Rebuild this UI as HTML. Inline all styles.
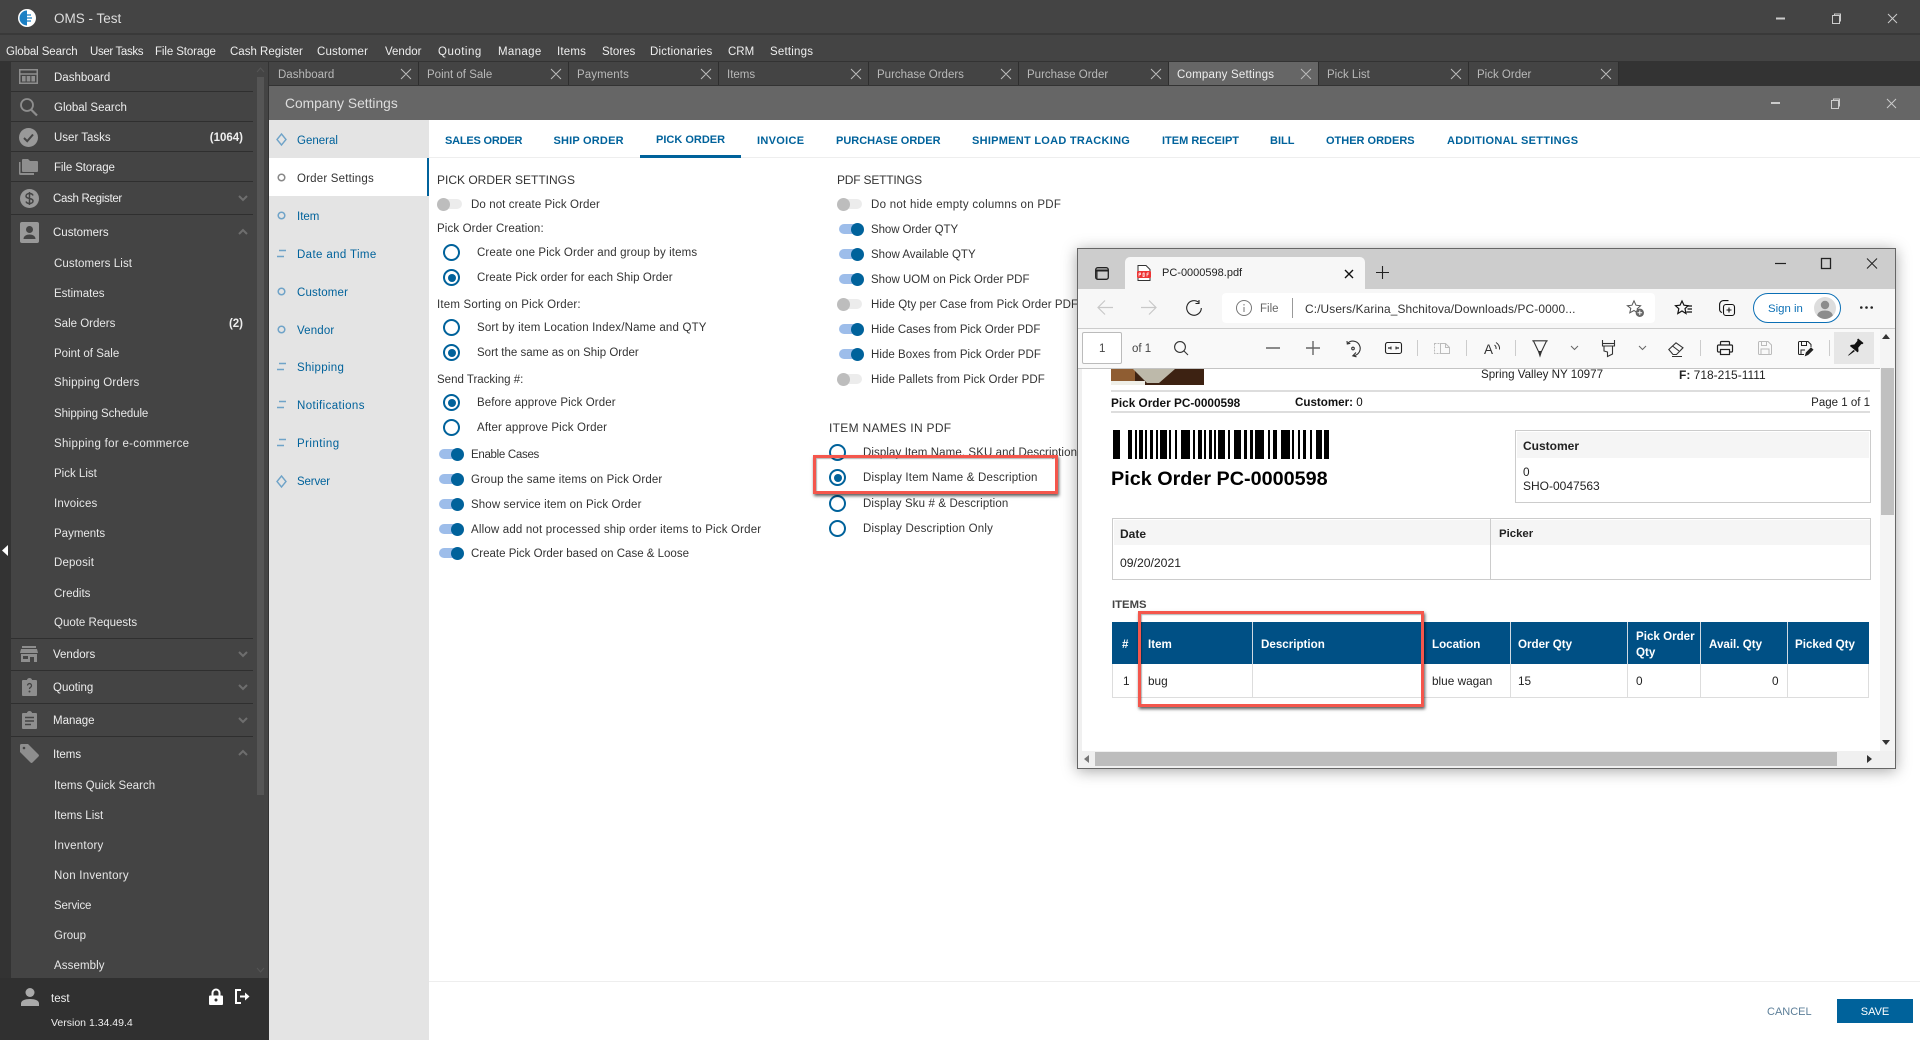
<!DOCTYPE html>
<html><head><meta charset="utf-8"><title>OMS - Test</title>
<style>
*{box-sizing:border-box}
html,body{margin:0;padding:0;width:1920px;height:1040px;overflow:hidden;background:#fff;font-family:"Liberation Sans",sans-serif;font-size:11.5px;color:#333}
.a{position:absolute}
.t{position:absolute;white-space:nowrap;line-height:16px;height:16px;margin-top:1px}
.m{color:#eee}
.s{color:#e8e8e8}
.b{font-weight:bold}
.tb{color:#b9b9b9;font-size:11.5px}
.n{color:#00629b}
.h{font-size:11px;font-weight:bold;color:#00629b}
.g{font-size:12px;color:#333}
.l{position:absolute;left:11px;width:242px;height:1px;background:#2f2f2f}
.tab{position:absolute;top:62px;height:23px;width:150px;background:#444;border-right:1px solid #2e2e2e}
.rd{position:absolute;width:17px;height:17px;border:2px solid #00629b;border-radius:50%;background:#fff}
.rd.on::after{content:"";position:absolute;left:2.5px;top:2.5px;width:8px;height:8px;border-radius:50%;background:#00629b}
.tg{position:absolute;width:24px;height:10px;border-radius:5px;background:#9dbdea}
.tg::after{content:"";position:absolute;right:-1px;top:-1.5px;width:13px;height:13px;border-radius:50%;background:#00629b}
.tg.off{background:#ececec}
.tg.off::after{left:-1px;right:auto;background:#bdbdbd}
.p{color:#222;font-size:11.8px}
.th{color:#fff;font-weight:bold;font-size:11.6px}
svg{position:absolute;overflow:visible}
.rb{position:absolute;border:3px solid #f4564c;box-shadow:1px 2px 3px rgba(0,0,0,.65),inset 1px 1px 1px rgba(0,0,0,.3);z-index:5}
</style></head><body>

<!-- top -->
<div class="a" style="left:0;top:0;width:1920px;height:62px;background:#444"></div>
<div class="a" style="left:0;top:33px;width:1920px;height:2px;background:#393939"></div>
<div class="a" style="left:0;top:61px;width:1920px;height:1px;background:#333"></div>
<svg style="left:18px;top:8px" width="18" height="20" viewBox="0 0 18 20"><circle cx="9" cy="10" r="9" fill="#fff"/><path d="M9 2.5A7.5 7.5 0 0 0 9 17.5Z" fill="#1b7fc4"/><path d="M6 7h7M5 10h9M6 13h7" stroke="#1b7fc4" stroke-width="1.2"/></svg>
<div class="t" style="left:54px;top:10px;font-size:13.5px;color:#ddd">OMS - Test</div>
<svg style="left:1776px;top:14px" width="130" height="10" viewBox="0 0 130 10" fill="none" stroke="#ccc"><path d="M0 4.5h9" stroke-width="2"/><rect x="56.5" y="1.5" width="7" height="8"/><path d="M58.5 1.500V0h6v7h-1"/><path d="M112 0l9 9M121 0l-9 9"/></svg>

<div class="t m" style="left:6px;top:43px;letter-spacing:-.1px">Global Search</div>
<div class="t m" style="left:90px;top:43px;letter-spacing:-.35px">User Tasks</div>
<div class="t m" style="left:155px;top:43px;letter-spacing:-.1px">File Storage</div>
<div class="t m" style="left:230px;top:43px">Cash Register</div>
<div class="t m" style="left:317px;top:43px;letter-spacing:.15px">Customer</div>
<div class="t m" style="left:385px;top:43px">Vendor</div>
<div class="t m" style="left:438px;top:43px;letter-spacing:.5px">Quoting</div>
<div class="t m" style="left:498px;top:43px;letter-spacing:.35px">Manage</div>
<div class="t m" style="left:557px;top:43px;letter-spacing:.2px">Items</div>
<div class="t m" style="left:602px;top:43px">Stores</div>
<div class="t m" style="left:650px;top:43px;letter-spacing:.2px">Dictionaries</div>
<div class="t m" style="left:728px;top:43px">CRM</div>
<div class="t m" style="left:770px;top:43px;letter-spacing:.2px">Settings</div>

<!-- sidebar -->
<div class="a" style="left:0;top:62px;width:11px;height:916px;background:#333"></div>
<div class="a" style="left:11px;top:62px;width:258px;height:916px;background:#444"></div>
<div class="a" style="left:268px;top:62px;width:1px;height:916px;background:#333"></div>
<div class="a" style="left:0;top:978px;width:269px;height:62px;background:#303030"></div>
<div class="a" style="left:257px;top:77px;width:7px;height:718px;background:#555"></div>
<svg style="left:2px;top:545px" width="6" height="11"><path d="M6 0v11L0 5.500Z" fill="#fff"/></svg>
<svg style="left:257px;top:68px" width="7" height="4"><path d="M0 4l3.500-4L7 4" stroke="#555" fill="none"/></svg>
<svg style="left:257px;top:968px" width="7" height="4"><path d="M0 0l3.500 4L7 0" stroke="#555" fill="none"/></svg>

<div class="l" style="top:91px"></div><div class="l" style="top:121px"></div><div class="l" style="top:151px"></div><div class="l" style="top:181px"></div><div class="l" style="top:214px"></div>
<div class="l" style="top:638px"></div><div class="l" style="top:670px"></div><div class="l" style="top:703px"></div><div class="l" style="top:736px"></div>

<svg style="left:19px;top:69px" width="19" height="15" viewBox="0 0 19 15" fill="none" stroke="#8e8e8e" stroke-width="1.500"><rect x=".75" y=".75" width="17.500" height="13.500"/><path d="M1 5h17"/><path d="M3 7h3.600v5.500H3zM7.700 7h3.600v5.500H7.700zM12.400 7H16v5.500h-3.600z" fill="#8e8e8e" stroke="none"/></svg>
<svg style="left:19px;top:98px" width="19" height="19" viewBox="0 0 19 19" fill="none" stroke="#8e8e8e" stroke-width="1.800"><circle cx="8" cy="7" r="6"/><path d="M12 11.500l6 6" stroke-width="2.200"/></svg>
<svg style="left:19px;top:128px" width="19" height="19" viewBox="0 0 19 19"><circle cx="9.500" cy="9.500" r="9.500" fill="#999"/><path d="M5 10l3.200 3.200L14 6.500" fill="none" stroke="#444" stroke-width="2"/></svg>
<svg style="left:19px;top:159px" width="19" height="16" viewBox="0 0 19 16" fill="#8e8e8e"><path d="M0 3h1.500v11H15v2H1.500A1.500 1.500 0 0 1 0 14.500Z"/><path d="M3 1a1 1 0 0 1 1-1h5l2 2h7a1 1 0 0 1 1 1v9a1 1 0 0 1-1 1H4a1 1 0 0 1-1-1Z"/></svg>
<svg style="left:20px;top:189px" width="19" height="19" viewBox="0 0 19 19"><circle cx="9.500" cy="9.500" r="9.500" fill="#999"/><path d="M13 6.500c-.5-1.500-2-2-3.500-2-2 0-3.500 1-3.500 2.500 0 3.500 7 1.500 7 5 0 1.500-1.500 2.500-3.500 2.500-1.500 0-3-.7-3.500-2M9.500 3v13" fill="none" stroke="#444" stroke-width="1.500"/></svg>
<svg style="left:20px;top:222px" width="19" height="21" viewBox="0 0 19 21"><rect width="19" height="21" rx="2" fill="#999"/><circle cx="9.500" cy="7.500" r="3.500" fill="#444"/><path d="M3.500 17c0-3 3-4.500 6-4.500s6 1.500 6 4.500Z" fill="#444"/></svg>
<svg style="left:20px;top:646px" width="18" height="16" viewBox="0 0 18 16" fill="#8e8e8e"><path d="M2 0h14v2H2zM1 3h16l1 4H0zM1 8h16v8h-3v-5h-4v5H1z"/><rect x="3" y="10" width="5" height="3" fill="#444"/></svg>
<svg style="left:22px;top:678px" width="15" height="18" viewBox="0 0 15 18"><path d="M1 2h4a2.500 2 0 0 1 5 0h4a1 1 0 0 1 1 1v14a1 1 0 0 1-1 1H1a1 1 0 0 1-1-1V3a1 1 0 0 1 1-1Z" fill="#8e8e8e"/><path d="M5.500 7.500a2 2 0 1 1 3 1.800c-.7.400-1 .9-1 1.700" fill="none" stroke="#444" stroke-width="1.300"/><circle cx="7.500" cy="13.500" r="1" fill="#444"/></svg>
<svg style="left:22px;top:711px" width="15" height="18" viewBox="0 0 15 18"><path d="M1 2h4a2.500 2 0 0 1 5 0h4a1 1 0 0 1 1 1v14a1 1 0 0 1-1 1H1a1 1 0 0 1-1-1V3a1 1 0 0 1 1-1Z" fill="#8e8e8e"/><path d="M3 6.500h9M3 10h9M3 13.500h6" stroke="#444" stroke-width="1.500"/></svg>
<svg style="left:20px;top:744px" width="19" height="19" viewBox="0 0 19 19" fill="#8e8e8e"><path d="M0 1.500A1.500 1.500 0 0 1 1.500 0H8l10.500 10.500a1.500 1.500 0 0 1 0 2L12.500 18.500a1.500 1.500 0 0 1-2 0L0 8Z"/><circle cx="4" cy="4" r="1.300" fill="#444"/></svg>

<div class="t m" style="left:54px;top:69px">Dashboard</div>
<div class="t m" style="left:54px;top:99px">Global Search</div>
<div class="t m" style="left:54px;top:129px">User Tasks</div>
<div class="t m b" style="right:1677px;top:129px">(1064)</div>
<div class="t m" style="left:54px;top:159px;letter-spacing:-.1px">File Storage</div>
<div class="t m" style="left:53px;top:190px;letter-spacing:-.3px">Cash Register</div>
<div class="t m" style="left:53px;top:224px">Customers</div>
<div class="t s" style="left:54px;top:255px;letter-spacing:.1px">Customers List</div>
<div class="t s" style="left:54px;top:285px">Estimates</div>
<div class="t s" style="left:54px;top:315px">Sale Orders</div>
<div class="t m b" style="right:1677px;top:315px">(2)</div>
<div class="t s" style="left:54px;top:345px">Point of Sale</div>
<div class="t s" style="left:54px;top:374px;letter-spacing:.15px">Shipping Orders</div>
<div class="t s" style="left:54px;top:405px;letter-spacing:-.1px">Shipping Schedule</div>
<div class="t s" style="left:54px;top:435px;letter-spacing:.3px">Shipping for e-commerce</div>
<div class="t s" style="left:54px;top:465px">Pick List</div>
<div class="t s" style="left:54px;top:495px;letter-spacing:.15px">Invoices</div>
<div class="t s" style="left:54px;top:525px">Payments</div>
<div class="t s" style="left:54px;top:554px;letter-spacing:.15px">Deposit</div>
<div class="t s" style="left:54px;top:585px">Credits</div>
<div class="t s" style="left:54px;top:614px">Quote Requests</div>
<div class="t m" style="left:53px;top:646px">Vendors</div>
<div class="t m" style="left:53px;top:679px">Quoting</div>
<div class="t m" style="left:53px;top:712px">Manage</div>
<div class="t m" style="left:53px;top:746px">Items</div>
<div class="t s" style="left:54px;top:777px;letter-spacing:.05px">Items Quick Search</div>
<div class="t s" style="left:54px;top:807px">Items List</div>
<div class="t s" style="left:54px;top:837px;letter-spacing:.25px">Inventory</div>
<div class="t s" style="left:54px;top:867px;letter-spacing:.25px">Non Inventory</div>
<div class="t s" style="left:54px;top:897px;letter-spacing:-.15px">Service</div>
<div class="t s" style="left:54px;top:927px">Group</div>
<div class="t s" style="left:54px;top:957px;letter-spacing:.1px">Assembly</div>

<svg style="left:239px;top:195px" width="8" height="6"><path d="M0 1l4 4 4-4" fill="none" stroke="#6e6e6e" stroke-width="2"/></svg>
<svg style="left:239px;top:229px" width="8" height="6"><path d="M0 5l4-4 4 4" fill="none" stroke="#6e6e6e" stroke-width="2"/></svg>
<svg style="left:239px;top:651px" width="8" height="6"><path d="M0 1l4 4 4-4" fill="none" stroke="#6e6e6e" stroke-width="2"/></svg>
<svg style="left:239px;top:684px" width="8" height="6"><path d="M0 1l4 4 4-4" fill="none" stroke="#6e6e6e" stroke-width="2"/></svg>
<svg style="left:239px;top:717px" width="8" height="6"><path d="M0 1l4 4 4-4" fill="none" stroke="#6e6e6e" stroke-width="2"/></svg>
<svg style="left:239px;top:750px" width="8" height="6"><path d="M0 5l4-4 4 4" fill="none" stroke="#6e6e6e" stroke-width="2"/></svg>

<svg style="left:21px;top:988px" width="18" height="18" viewBox="0 0 18 18" fill="#aaa"><circle cx="9" cy="4.500" r="4.500"/><path d="M0 18v-2.500c0-3 4-4.500 9-4.500s9 1.500 9 4.500V18Z"/></svg>
<div class="t" style="left:51px;top:990px;color:#eee">test</div>
<svg style="left:209px;top:989px" width="14" height="16" viewBox="0 0 14 16" fill="#fff"><path d="M1 6.500h12a1 1 0 0 1 1 1V15a1 1 0 0 1-1 1H1a1 1 0 0 1-1-1V7.500a1 1 0 0 1 1-1Z"/><path d="M3.500 7V4a3.500 3.500 0 0 1 7 0v3" fill="none" stroke="#fff" stroke-width="2"/><circle cx="7" cy="11" r="1.500" fill="#303030"/></svg>
<svg style="left:235px;top:989px" width="16" height="15" viewBox="0 0 16 15" fill="none" stroke="#fff" stroke-width="2"><path d="M6 1H1v13h5"/><path d="M5 7.500h7"/><path d="M10 3.500l4.500 4-4.500 4Z" fill="#fff" stroke="none"/></svg>
<div class="t" style="left:51px;top:1014px;color:#eee;font-size:10.5px">Version 1.34.49.4</div>

<!-- tab strip -->
<div class="a" style="left:269px;top:62px;width:1651px;height:24px;background:#333"></div>
<div class="tab" style="left:269px"></div><div class="tab" style="left:419px"></div><div class="tab" style="left:569px"></div><div class="tab" style="left:719px"></div><div class="tab" style="left:869px"></div><div class="tab" style="left:1019px"></div><div class="tab" style="left:1169px;background:#666"></div><div class="tab" style="left:1319px"></div><div class="tab" style="left:1469px"></div>
<div class="t tb" style="left:278px;top:66px">Dashboard</div>
<div class="t tb" style="left:427px;top:66px">Point of Sale</div>
<div class="t tb" style="left:577px;top:66px;letter-spacing:.1px">Payments</div>
<div class="t tb" style="left:727px;top:66px">Items</div>
<div class="t tb" style="left:877px;top:66px">Purchase Orders</div>
<div class="t tb" style="left:1027px;top:66px">Purchase Order</div>
<div class="t" style="left:1177px;top:66px;color:#eee;letter-spacing:.2px">Company Settings</div>
<div class="t tb" style="left:1327px;top:66px">Pick List</div>
<div class="t tb" style="left:1477px;top:66px">Pick Order</div>
<svg style="left:401px;top:69px" width="1217" height="10" viewBox="0 0 1217 10" fill="none" stroke="#bbb"><path d="M0 0l10 10M10 0L0 10M150 0l10 10M160 0l-10 10M300 0l10 10M310 0l-10 10M450 0l10 10M460 0l-10 10M600 0l10 10M610 0l-10 10M750 0l10 10M760 0l-10 10M900 0l10 10M910 0l-10 10M1050 0l10 10M1060 0l-10 10M1200 0l10 10M1210 0l-10 10"/></svg>

<!-- window -->
<div class="a" style="left:269px;top:86px;width:1651px;height:34px;background:#666"></div>
<div class="a" style="left:269px;top:85px;width:1651px;height:1px;background:#333"></div>
<div class="t" style="left:285px;top:95px;font-size:13.8px;color:#ddd">Company Settings</div>
<svg style="left:1771px;top:98px" width="130" height="11" viewBox="0 0 130 11" fill="none" stroke="#ccc"><path d="M0 5h9" stroke-width="2"/><rect x="60.500" y="2.500" width="7" height="8"/><path d="M62.500 2.500V1h6v7h-1"/><path d="M116 1l9 9M125 1l-9 9"/></svg>

<!-- left nav -->
<div class="a" style="left:269px;top:120px;width:160px;height:920px;background:#e4e4e4"></div>
<div class="a" style="left:269px;top:158px;width:160px;height:38px;background:#fff;border-right:2px solid #00629b"></div>
<svg style="left:276px;top:133px" width="11" height="13" viewBox="0 0 11 13"><path d="M5.500 1L10 6.500 5.500 12 1 6.500Z" fill="none" stroke="#6fa3c8" stroke-width="1.400"/></svg>
<svg style="left:277px;top:173px" width="9" height="9"><circle cx="4.500" cy="4.500" r="3.300" fill="none" stroke="#888" stroke-width="1.500"/></svg>
<svg style="left:277px;top:211px" width="9" height="9"><circle cx="4.500" cy="4.500" r="3.300" fill="none" stroke="#6fa3c8" stroke-width="1.500"/></svg>
<svg style="left:277px;top:249px" width="9" height="9"><path d="M2 1.500h7M0 7.500h7" stroke="#6fa3c8" stroke-width="1.500"/></svg>
<svg style="left:277px;top:287px" width="9" height="9"><circle cx="4.500" cy="4.500" r="3.300" fill="none" stroke="#6fa3c8" stroke-width="1.500"/></svg>
<svg style="left:277px;top:325px" width="9" height="9"><circle cx="4.500" cy="4.500" r="3.300" fill="none" stroke="#6fa3c8" stroke-width="1.500"/></svg>
<svg style="left:277px;top:362px" width="9" height="9"><path d="M2 1.500h7M0 7.500h7" stroke="#6fa3c8" stroke-width="1.500"/></svg>
<svg style="left:277px;top:400px" width="9" height="9"><path d="M2 1.500h7M0 7.500h7" stroke="#6fa3c8" stroke-width="1.500"/></svg>
<svg style="left:277px;top:438px" width="9" height="9"><path d="M2 1.500h7M0 7.500h7" stroke="#6fa3c8" stroke-width="1.500"/></svg>
<svg style="left:276px;top:475px" width="11" height="13" viewBox="0 0 11 13"><path d="M5.500 1L10 6.500 5.500 12 1 6.500Z" fill="none" stroke="#6fa3c8" stroke-width="1.400"/></svg>
<div class="t n" style="left:297px;top:132px">General</div>
<div class="t" style="left:297px;top:170px;color:#333;letter-spacing:.2px">Order Settings</div>
<div class="t n" style="left:297px;top:208px">Item</div>
<div class="t n" style="left:297px;top:246px;letter-spacing:.37px">Date and Time</div>
<div class="t n" style="left:297px;top:284px;letter-spacing:.15px">Customer</div>
<div class="t n" style="left:297px;top:322px;letter-spacing:.15px">Vendor</div>
<div class="t n" style="left:297px;top:359px;letter-spacing:.3px">Shipping</div>
<div class="t n" style="left:297px;top:397px;letter-spacing:.4px">Notifications</div>
<div class="t n" style="left:297px;top:435px;letter-spacing:.45px">Printing</div>
<div class="t n" style="left:297px;top:473px;letter-spacing:-.15px">Server</div>

<!-- content tabs -->
<div class="a" style="left:429px;top:157px;width:1491px;height:1px;background:#eee"></div>
<div class="a" style="left:640px;top:155px;width:101px;height:3px;background:#00629b"></div>
<div class="t h" style="left:445px;top:132px;letter-spacing:-.2px">SALES ORDER</div>
<div class="t h" style="left:553.500px;top:132px;letter-spacing:.2px">SHIP ORDER</div>
<div class="t h" style="left:656px;top:131px">PICK ORDER</div>
<div class="t h" style="left:757px;top:132px;letter-spacing:.3px">INVOICE</div>
<div class="t h" style="left:836px;top:132px">PURCHASE ORDER</div>
<div class="t h" style="left:972px;top:132px;letter-spacing:.27px">SHIPMENT LOAD TRACKING</div>
<div class="t h" style="left:1162px;top:132px">ITEM RECEIPT</div>
<div class="t h" style="left:1270px;top:132px">BILL</div>
<div class="t h" style="left:1326px;top:132px">OTHER ORDERS</div>
<div class="t h" style="left:1447px;top:132px;letter-spacing:.3px">ADDITIONAL SETTINGS</div>

<!-- left settings -->
<div class="t g" style="left:437px;top:171px">PICK ORDER SETTINGS</div>
<div class="tg off" style="left:438px;top:199px"></div><div class="t" style="left:471px;top:196px;letter-spacing:.1px">Do not create Pick Order</div>
<div class="t" style="left:437px;top:220px;letter-spacing:.13px">Pick Order Creation:</div>
<div class="rd" style="left:443px;top:244px"></div><div class="t" style="left:477px;top:244px;letter-spacing:.12px">Create one Pick Order and group by items</div>
<div class="rd on" style="left:443px;top:269px"></div><div class="t" style="left:477px;top:269px;letter-spacing:.07px">Create Pick order for each Ship Order</div>
<div class="t" style="left:437px;top:296px;letter-spacing:.19px">Item Sorting on Pick Order:</div>
<div class="rd" style="left:443px;top:319px"></div><div class="t" style="left:477px;top:319px;letter-spacing:.18px">Sort by item Location Index/Name and QTY</div>
<div class="rd on" style="left:443px;top:344px"></div><div class="t" style="left:477px;top:344px">Sort the same as on Ship Order</div>
<div class="t" style="left:437px;top:371px">Send Tracking #:</div>
<div class="rd on" style="left:443px;top:394px"></div><div class="t" style="left:477px;top:394px;letter-spacing:.1px">Before approve Pick Order</div>
<div class="rd" style="left:443px;top:419px"></div><div class="t" style="left:477px;top:419px;letter-spacing:.15px">After approve Pick Order</div>
<div class="tg" style="left:439px;top:449px"></div><div class="t" style="left:471px;top:446px;letter-spacing:-.3px">Enable Cases</div>
<div class="tg" style="left:439px;top:474px"></div><div class="t" style="left:471px;top:471px;letter-spacing:.14px">Group the same items on Pick Order</div>
<div class="tg" style="left:439px;top:499px"></div><div class="t" style="left:471px;top:496px;letter-spacing:.12px">Show service item on Pick Order</div>
<div class="tg" style="left:439px;top:524px"></div><div class="t" style="left:471px;top:521px;letter-spacing:.18px">Allow add not processed ship order items to Pick Order</div>
<div class="tg" style="left:439px;top:548px"></div><div class="t" style="left:471px;top:545px">Create Pick Order based on Case &amp; Loose</div>

<!-- right settings -->
<div class="t g" style="left:837px;top:171px;letter-spacing:-.2px">PDF SETTINGS</div>
<div class="tg off" style="left:838px;top:199px"></div><div class="t" style="left:871px;top:196px;letter-spacing:.27px">Do not hide empty columns on PDF</div>
<div class="tg" style="left:839px;top:224px"></div><div class="t" style="left:871px;top:221px;letter-spacing:-.08px">Show Order QTY</div>
<div class="tg" style="left:839px;top:249px"></div><div class="t" style="left:871px;top:246px">Show Available QTY</div>
<div class="tg" style="left:839px;top:274px"></div><div class="t" style="left:871px;top:271px">Show UOM on Pick Order PDF</div>
<div class="tg off" style="left:838px;top:299px"></div><div class="t" style="left:871px;top:296px;letter-spacing:.07px">Hide Qty per Case from Pick Order PDF</div>
<div class="tg" style="left:839px;top:324px"></div><div class="t" style="left:871px;top:321px">Hide Cases from Pick Order PDF</div>
<div class="tg" style="left:839px;top:349px"></div><div class="t" style="left:871px;top:346px;letter-spacing:.04px">Hide Boxes from Pick Order PDF</div>
<div class="tg off" style="left:838px;top:374px"></div><div class="t" style="left:871px;top:371px;letter-spacing:.08px">Hide Pallets from Pick Order PDF</div>
<div class="t g" style="left:829px;top:419px;letter-spacing:.3px">ITEM NAMES IN PDF</div>
<div class="rd" style="left:829px;top:444px"></div><div class="t" style="left:863px;top:444px;letter-spacing:.1px">Display Item Name, SKU and Description</div>
<div class="rd on" style="left:829px;top:469px"></div><div class="t" style="left:863px;top:469px;letter-spacing:.19px">Display Item Name &amp; Description</div>
<div class="rd" style="left:829px;top:495px"></div><div class="t" style="left:863px;top:495px;letter-spacing:.13px">Display Sku # &amp; Description</div>
<div class="rd" style="left:829px;top:520px"></div><div class="t" style="left:863px;top:520px;letter-spacing:.2px">Display Description Only</div>
<div class="rb" style="left:813px;top:455px;width:245px;height:39px"></div>

<!-- footer -->
<div class="a" style="left:429px;top:981px;width:1491px;height:1px;background:#eee"></div>
<div class="t" style="left:1767px;top:1003px;color:#5d7f99;font-size:11px">CANCEL</div>
<div class="a" style="left:1837px;top:999px;width:76px;height:24px;background:#00629b;color:#fff;font-size:11px;text-align:center;line-height:26px">SAVE</div>

<!-- PDF window -->
<div class="a" style="left:1077px;top:248px;width:819px;height:521px;background:#fff;border:1px solid #666;box-shadow:0 2px 14px rgba(0,0,0,.35);z-index:6;overflow:hidden">
<div style="position:absolute;left:-1078px;top:-249px;width:1920px;height:1040px">
  <div class="a" style="left:1078px;top:249px;width:817px;height:40px;background:#cdcdcd"></div>
  <div class="a" style="left:1125px;top:257px;width:240px;height:32px;background:#f7f7f7;border-radius:5px 5px 0 0"></div>
  <div class="a" style="left:1078px;top:289px;width:817px;height:39px;background:#f7f7f7"></div>
  <div class="a" style="left:1078px;top:328px;width:817px;height:1px;background:#ccc"></div>
  <div class="a" style="left:1078px;top:329px;width:817px;height:39px;background:#f9f9f9"></div>
  <div class="a" style="left:1078px;top:368px;width:817px;height:1px;background:#c4c4c4"></div>
  <!-- tab bar icons -->
  <svg style="left:1095px;top:267px" width="14" height="13" viewBox="0 0 14 13" fill="none" stroke="#222" stroke-width="1.300"><rect x=".7" y=".7" width="12.600" height="11.600" rx="2"/><path d="M1 3.500h12" stroke-width="2"/><path d="M2 4v8" stroke-width="1"/></svg>
  <svg style="left:1137px;top:265px" width="14" height="16" viewBox="0 0 14 16"><path d="M1 .5h8l4 4V15.500H1Z" fill="#fff" stroke="#333"/><rect x="0" y="6" width="14" height="7" rx="1" fill="#e33"/><path d="M2 8v3.500M2 8h1.500v1.500H2M6 8v3.500h1.200V8H6M10 8v3.500M10 8h2M10 9.700h1.500" stroke="#fff" stroke-width=".7" fill="none"/></svg>
  <div class="t" style="left:1162px;top:264px;font-size:11px;color:#222">PC-0000598.pdf</div>
  <svg style="left:1345px;top:270px" width="8" height="8"><path d="M0 0l8 8M8 0L0 8" stroke="#111" stroke-width="1.400"/></svg>
  <svg style="left:1376px;top:266px" width="13" height="13"><path d="M6.500 0v13M0 6.500h13" stroke="#222" stroke-width="1.100"/></svg>
  <svg style="left:1775px;top:258px" width="103" height="11" viewBox="0 0 103 11" fill="none" stroke="#222"><path d="M0 5.500h11" stroke-width="1.200"/><rect x="46.500" y=".5" width="9" height="10" stroke-width="1.300"/><path d="M92 .5l10 10M102 .5l-10 10" stroke-width="1"/></svg>
  <!-- nav -->
  <svg style="left:1097px;top:299px" width="60" height="17" viewBox="0 0 60 17" fill="none" stroke="#c8c8c8" stroke-width="1.200"><path d="M16 8.500H1M8 1.500l-7 7 7 7"/><path d="M44 8.500h15M52 1.500l7 7-7 7"/></svg>
  <svg style="left:1186px;top:300px" width="16" height="16" viewBox="0 0 16 16" fill="none" stroke="#222" stroke-width="1.100"><path d="M12.500 2.200A7.300 7.300 0 1 0 15.300 8"/><path d="M13 0v3.500h-3.500"/></svg>
  <div class="a" style="left:1222px;top:293px;width:433px;height:30px;background:#fff;border-radius:4px"></div>
  <svg style="left:1236px;top:300px" width="16" height="16" viewBox="0 0 16 16" fill="none" stroke="#777"><circle cx="8" cy="8" r="7.500"/><path d="M8 7v5M8 4v1.500"/></svg>
  <div class="t" style="left:1260px;top:300px;color:#666;font-size:11.5px">File</div>
  <div class="a" style="left:1292px;top:298px;width:1px;height:20px;background:#999"></div>
  <div class="t" style="left:1305px;top:300px;font-size:11.9px;color:#333;letter-spacing:.12px">C:/Users/Karina_Shchitova/Downloads/PC-0000...</div>
  <svg style="left:1627px;top:300px" width="17" height="17" viewBox="0 0 17 17"><path d="M7 .8l2 4.400 4.600.5-3.400 3.100 1 4.500L7 10.500l-4.200 2.300 1-4.500L.4 5.700 5 5.200Z" fill="none" stroke="#555"/><circle cx="12.800" cy="12.800" r="4.200" fill="#666"/><path d="M12.800 10.500v4.600M10.500 12.800h4.600" stroke="#fff"/></svg>
  <svg style="left:1675px;top:300px" width="17" height="16" viewBox="0 0 17 16" fill="none" stroke="#111" stroke-width="1.200"><path d="M7 1l2 4.200 4 .5-3 3 1 4.800L7 11 2.800 13.500l1-4.800-3.300-3L5 5.200Z"/><path d="M12.500 6h4.500M12.500 9H17M11.500 12H17"/></svg>
  <svg style="left:1719px;top:300px" width="16" height="16" viewBox="0 0 16 16" fill="none" stroke="#111" stroke-width="1.100"><rect x="4.500" y="4.500" width="11" height="11" rx="2.500"/><path d="M3 12.500C1.500 12 .6 10.800 .6 9.500V4.500C.6 2.300 2.300.6 4.500.6h5"/><path d="M10 7.500v5M7.500 10h5"/></svg>
  <div class="a" style="left:1753px;top:293px;width:88px;height:30px;border:1.500px solid #0b6fb5;border-radius:15px;background:#fff"></div>
  <div class="t" style="left:1768px;top:300px;color:#0b6fb5;font-size:11.4px">Sign in</div>
  <svg style="left:1814px;top:297px" width="22" height="22" viewBox="0 0 22 22"><circle cx="11" cy="11" r="11" fill="#ddd"/><circle cx="11" cy="8" r="4.200" fill="#8c8c8c"/><path d="M3.200 18.500c.6-3.500 3.800-5 7.800-5s7.200 1.500 7.800 5c-2 2-4.800 3.500-7.800 3.500s-5.800-1.500-7.800-3.500Z" fill="#8c8c8c"/></svg>
  <svg style="left:1860px;top:306px" width="13" height="3" fill="#222"><circle cx="1.300" cy="1.500" r="1.300"/><circle cx="6.500" cy="1.500" r="1.300"/><circle cx="11.700" cy="1.500" r="1.300"/></svg>
  <!-- pdf toolbar -->
  <div class="a" style="left:1082px;top:332px;width:40px;height:32px;background:#fff;border:1px solid #bbb;border-radius:2px"></div>
  <div class="t" style="left:1099px;top:340px;color:#444;font-size:11.5px">1</div>
  <div class="t" style="left:1132px;top:340px;color:#444;font-size:11.5px">of 1</div>
  <svg style="left:1174px;top:341px" width="14" height="14" fill="none" stroke="#333" stroke-width="1.100"><circle cx="6" cy="6" r="5.400"/><path d="M10 10l4 4"/></svg>
  <svg style="left:1266px;top:341px" width="54" height="14" fill="none" stroke="#666" stroke-width="1.400"><path d="M0 7h14M40 7h14M47 0v14"/></svg>
  <svg style="left:1345px;top:340px" width="16" height="17" viewBox="0 0 16 17" fill="none" stroke="#333" stroke-width="1.100"><path d="M2.500 3.500A7.300 7.300 0 1 1 8.500 15.700"/><path d="M11 12.500l-3.200 3.300 3.700 1M2 1l.3 3 3-.7" /><circle cx="8" cy="8.500" r="1.300"/></svg>
  <svg style="left:1385px;top:342px" width="17" height="12" viewBox="0 0 17 12" fill="none" stroke="#222"><rect x=".5" y=".5" width="16" height="11" rx="2" stroke-width="1.100"/><path d="M3 6h3.500M14 6h-3.500" stroke-width="1.200"/><path d="M6 4.500v3M11 4.500v3" stroke-width="1"/></svg>
  <div class="a" style="left:1417px;top:340px;width:1px;height:16px;background:#ccc"></div>
  <svg style="left:1434px;top:343px" width="16" height="11" viewBox="0 0 16 11" fill="none" stroke="#bbb"><path d="M.5.500h6v10h-6z" stroke-dasharray="2 1"/><path d="M6.500.500h5l4 4v6h-9z"/><path d="M11.500.500v4h4"/></svg>
  <div class="a" style="left:1466px;top:340px;width:1px;height:16px;background:#ccc"></div>
  <div class="t" style="left:1484px;top:341px;color:#333;font-size:13.5px">A</div>
  <svg style="left:1494px;top:342px" width="6" height="9" fill="none" stroke="#333"><path d="M.5 3q2 1.500 1.500 4M2 .5q4 2.500 3.500 7"/></svg>
  <div class="a" style="left:1515px;top:340px;width:1px;height:16px;background:#ccc"></div>
  <svg style="left:1532px;top:340px" width="16" height="16" viewBox="0 0 16 16" fill="none" stroke="#333"><path d="M.3.800h15.400M1.500 1l5 10.500h3L14.500 1" stroke-width="1.100"/><path d="M6.500 11.500L8 16l1.500-4.500" fill="#333"/></svg>
  <svg style="left:1571px;top:346px" width="7" height="4" fill="none" stroke="#666"><path d="M0 0l3.500 3.500L7 0"/></svg>
  <svg style="left:1602px;top:340px" width="13" height="17" viewBox="0 0 13 17" fill="none" stroke="#333" stroke-width="1.100"><path d="M.5 0v6h12V0M2 6v5l3.500 1v4.500l5-2.500V6"/><path d="M.5 3.500h12"/></svg>
  <svg style="left:1639px;top:346px" width="7" height="4" fill="none" stroke="#666"><path d="M0 0l3.500 3.500L7 0"/></svg>
  <svg style="left:1668px;top:342px" width="16" height="15" viewBox="0 0 16 15" fill="none" stroke="#333" stroke-width="1.100"><path d="M.8 7.500L8 .8l7 5-6.500 6.700H5Z"/><path d="M4.500 4l6.500 5M4 14.500h10"/></svg>
  <div class="a" style="left:1700px;top:340px;width:1px;height:16px;background:#ccc"></div>
  <svg style="left:1717px;top:341px" width="16" height="14" viewBox="0 0 16 14" fill="none" stroke="#222" stroke-width="1.200"><path d="M3.500 4V1.500a1 1 0 0 1 1-1h7a1 1 0 0 1 1 1V4M3.500 11H1.500a1 1 0 0 1-1-1V5a1 1 0 0 1 1-1h13a1 1 0 0 1 1 1v5a1 1 0 0 1-1 1h-2"/><rect x="3.500" y="8.500" width="9" height="5"/></svg>
  <svg style="left:1758px;top:341px" width="14" height="14" viewBox="0 0 14 14" fill="none" stroke="#bbb"><path d="M1.500.500h8.500l3.500 3.500v8.500a1 1 0 0 1-1 1h-11a1 1 0 0 1-1-1v-11a1 1 0 0 1 1-1Z"/><path d="M3.500 1v3.500h5V1M3 13.500V8h8v5.500"/></svg>
  <svg style="left:1798px;top:341px" width="15" height="15" viewBox="0 0 15 15" fill="none" stroke="#222"><path d="M6 13.500H1.500a1 1 0 0 1-1-1v-11a1 1 0 0 1 1-1H10l3 3V6"/><path d="M3.500 1v3.500h5V1M3 13.500V9h4"/><path d="M7.500 14.500l.8-2.800L13 7l1.800 1.800L10 13.500Z" fill="#222"/></svg>
  <div class="a" style="left:1829px;top:340px;width:1px;height:16px;background:#ccc"></div>
  <div class="a" style="left:1834px;top:332px;width:40px;height:32px;background:#e6e6e6"></div>
  <svg style="left:1847px;top:339px" width="16" height="17" viewBox="0 0 16 17" fill="#111"><g transform="translate(9 7.500) rotate(40)"><path d="M-3.500-7.500h7v1.500l-1 .8v4.700L5 2v1.500H-5V2l2.500-2.500v-4.700l-1-.8Z"/></g><path d="M6.500 11L.8 16.500l1.200-.1L8 12Z"/></svg>
  <!-- scrollbars -->
  <div class="a" style="left:1880px;top:329px;width:15px;height:422px;background:#f4f4f4"></div>
  <svg style="left:1882px;top:334px" width="8" height="5"><path d="M0 5l4-5 4 5Z" fill="#333"/></svg>
  <svg style="left:1882px;top:740px" width="8" height="5"><path d="M0 0l4 5 4-5Z" fill="#333"/></svg>
  <div class="a" style="left:1881px;top:368px;width:13px;height:147px;background:#c0c0c0"></div>
  <div class="a" style="left:1078px;top:751px;width:817px;height:17px;background:#f0f0f0"></div>
  <div class="a" style="left:1095px;top:752px;width:742px;height:14px;background:#bdbdbd"></div>
  <svg style="left:1084px;top:755px" width="5" height="8"><path d="M5 0L0 4l5 4Z" fill="#777"/></svg>
  <svg style="left:1867px;top:755px" width="5" height="8"><path d="M0 0l5 4-5 4Z" fill="#333"/></svg>
  <div class="a" style="left:1078px;top:369px;width:4px;height:382px;background:#f0f0f0"></div>

  <!-- PDF page -->
  <svg style="left:1111px;top:369px" width="93" height="16" viewBox="0 0 93 16"><rect width="93" height="16" fill="#3d2212"/><rect x="0" y="0" width="24" height="16" fill="#8f5d32"/><path d="M22 0h42L48 14H36Z" fill="#bdb9aa"/><rect x="0" y="12" width="34" height="4" fill="#efefe8"/></svg>
  <div class="t" style="left:1481px;top:366px;font-size:11.6px;color:#222">Spring Valley NY 10977</div>
  <div class="t" style="left:1679px;top:366px;font-size:12px;color:#222"><b>F:</b> 718-215-1111</div>
  <div class="a" style="left:1111px;top:390px;width:759px;height:2px;background:#ddd"></div>
  <div class="t b" style="left:1111px;top:394px;font-size:11.8px;color:#111">Pick Order PC-0000598</div>
  <div class="t" style="left:1295px;top:394px;font-size:11.6px;color:#111"><b>Customer:</b> 0</div>
  <div class="t" style="right:50px;top:394px;font-size:11.5px;color:#222">Page 1 of 1</div>
  <div class="a" style="left:1111px;top:411px;width:759px;height:2px;background:#ddd"></div>
  <svg style="left:1113px;top:430px" width="216" height="29" viewBox="0 0 216 29" fill="#000"><path d="M0 0h7v29H0zM15 0h4v29h-4zM22 0h2v29h-2zM26 0h4v29h-4zM32 0h2v29h-2zM37 0h3v29h-3zM43 0h2v29h-2zM47 0h7v29h-7zM56 0h2v29h-2zM62 0h2v29h-2zM68 0h9v29h-9zM80 0h2v29h-2zM85 0h4v29h-4zM91 0h2v29h-2zM96 0h3v29h-3zM101 0h2v29h-2zM105 0h7v29h-7zM115 0h2v29h-2zM121 0h7v29h-7zM131 0h3v29h-3zM137 0h3v29h-3zM142 0h9v29h-9zM155 0h2v29h-2zM160 0h4v29h-4zM168 0h9v29h-9zM179 0h2v29h-2zM185 0h2v29h-2zM190 0h3v29h-3zM197 0h2v29h-2zM203 0h6v29h-6zM211 0h5v29h-5z"/></svg>
  <div class="t b" style="left:1111px;top:470px;font-size:19.8px;color:#000">Pick Order PC-0000598</div>
  <div class="a" style="left:1515px;top:430px;width:356px;height:73px;border:1.500px solid #ccc;background:#fff"></div>
  <div class="a" style="left:1517px;top:431.500px;width:352px;height:26px;background:#f5f5f5"></div>
  <div class="t b" style="left:1523px;top:437px;font-size:12px;color:#222">Customer</div>
  <div class="t p" style="left:1523px;top:463px">0</div>
  <div class="t p" style="left:1523px;top:477px;font-size:12px">SHO-0047563</div>
  <div class="a" style="left:1112px;top:518px;width:759px;height:62px;border:1.500px solid #ccc;background:#fff"></div>
  <div class="a" style="left:1113.500px;top:519.500px;width:756px;height:25px;background:#f5f5f5"></div>
  <div class="a" style="left:1490px;top:518px;width:1px;height:62px;background:#ccc"></div>
  <div class="t b" style="left:1120px;top:525px;font-size:12px;color:#222">Date</div>
  <div class="t b" style="left:1499px;top:525px;font-size:11.4px;color:#222">Picker</div>
  <div class="t p" style="left:1120px;top:554px;font-size:12.2px">09/20/2021</div>
  <div class="t b" style="left:1112px;top:596px;font-size:11.3px;color:#444">ITEMS</div>
  <div class="a" style="left:1112px;top:622px;width:757px;height:42px;background:#005085"></div>
  <div class="a" style="left:1112px;top:664px;width:757px;height:34px;border:1px solid #ddd;border-top:0;background:#fff"></div>
  <div class="a" style="left:1252px;top:622px;width:1px;height:42px;background:#cfd9e2"></div>
  <div class="a" style="left:1510px;top:622px;width:1px;height:42px;background:#cfd9e2"></div>
  <div class="a" style="left:1627px;top:622px;width:1px;height:42px;background:#cfd9e2"></div>
  <div class="a" style="left:1700px;top:622px;width:1px;height:42px;background:#cfd9e2"></div>
  <div class="a" style="left:1787px;top:622px;width:1px;height:42px;background:#cfd9e2"></div>
  <div class="a" style="left:1252px;top:664px;width:1px;height:33px;background:#ddd"></div>
  <div class="a" style="left:1423px;top:664px;width:1px;height:33px;background:#ddd"></div>
  <div class="a" style="left:1510px;top:664px;width:1px;height:33px;background:#ddd"></div>
  <div class="a" style="left:1627px;top:664px;width:1px;height:33px;background:#ddd"></div>
  <div class="a" style="left:1700px;top:664px;width:1px;height:33px;background:#ddd"></div>
  <div class="a" style="left:1787px;top:664px;width:1px;height:33px;background:#ddd"></div>
  <div class="a" style="left:1139px;top:664px;width:1px;height:33px;background:#ddd"></div>
  <div class="t th" style="left:1122px;top:636px">#</div>
  <div class="t th" style="left:1148px;top:636px">Item</div>
  <div class="t th" style="left:1261px;top:636px">Description</div>
  <div class="t th" style="left:1432px;top:636px">Location</div>
  <div class="t th" style="left:1518px;top:636px">Order Qty</div>
  <div class="t th" style="left:1636px;top:628px">Pick Order</div>
  <div class="t th" style="left:1636px;top:644px">Qty</div>
  <div class="t th" style="left:1709px;top:636px">Avail. Qty</div>
  <div class="t th" style="left:1795px;top:636px">Picked Qty</div>
  <div class="t p" style="left:1123px;top:672px">1</div>
  <div class="t p" style="left:1148px;top:672px">bug</div>
  <div class="t p" style="left:1432px;top:672px">blue wagan</div>
  <div class="t p" style="left:1518px;top:672px">15</div>
  <div class="t p" style="left:1636px;top:672px">0</div>
  <div class="t p" style="left:1772px;top:672px">0</div>
  <div class="rb" style="left:1138px;top:611px;width:286px;height:96px"></div>
</div>
</div>
</body></html>
